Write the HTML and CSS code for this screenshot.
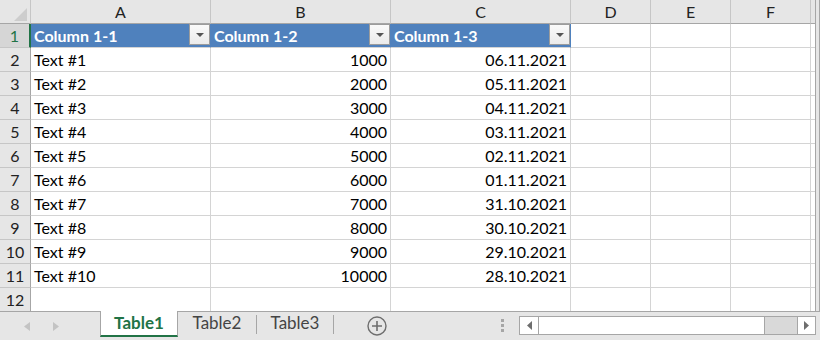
FILE: index.html
```html
<!DOCTYPE html>
<html lang="en">
<head>
  <meta charset="UTF-8">
  <title>Table1</title>
  <link rel="stylesheet" href="styles.css">
</head>
<body>
  <div class="window">
    <div class="sheet">
      <!-- column headers -->
      <div class="cell corner">
        <svg width="16" height="16" viewBox="0 0 16 16"><polygon points="2,15 15,15 15,2" fill="#cdcdcd"/></svg>
      </div>
      <div class="cell ch">A</div>
      <div class="cell ch">B</div>
      <div class="cell ch">C</div>
      <div class="cell ch">D</div>
      <div class="cell ch">E</div>
      <div class="cell ch">F</div>
      <div class="cell ch"></div>

      <!-- table header row -->
      <div class="cell rh sel">1</div>
      <div class="cell hd"><span>Column 1-1</span><span class="filter"><svg width="8" height="4" viewBox="0 0 8 4"><polygon points="0,0 8,0 4,4" fill="#555"/></svg></span></div>
      <div class="cell hd"><span>Column 1-2</span><span class="filter"><svg width="8" height="4" viewBox="0 0 8 4"><polygon points="0,0 8,0 4,4" fill="#555"/></svg></span></div>
      <div class="cell hd"><span>Column 1-3</span><span class="filter"><svg width="8" height="4" viewBox="0 0 8 4"><polygon points="0,0 8,0 4,4" fill="#555"/></svg></span></div>
      <div class="cell"></div><div class="cell"></div><div class="cell"></div><div class="cell"></div>

      <div class="cell rh">2</div>
      <div class="cell">Text #1</div><div class="cell num">1000</div><div class="cell num">06.11.2021</div>
      <div class="cell"></div><div class="cell"></div><div class="cell"></div><div class="cell"></div>

      <div class="cell rh">3</div>
      <div class="cell">Text #2</div><div class="cell num">2000</div><div class="cell num">05.11.2021</div>
      <div class="cell"></div><div class="cell"></div><div class="cell"></div><div class="cell"></div>

      <div class="cell rh">4</div>
      <div class="cell">Text #3</div><div class="cell num">3000</div><div class="cell num">04.11.2021</div>
      <div class="cell"></div><div class="cell"></div><div class="cell"></div><div class="cell"></div>

      <div class="cell rh">5</div>
      <div class="cell">Text #4</div><div class="cell num">4000</div><div class="cell num">03.11.2021</div>
      <div class="cell"></div><div class="cell"></div><div class="cell"></div><div class="cell"></div>

      <div class="cell rh">6</div>
      <div class="cell">Text #5</div><div class="cell num">5000</div><div class="cell num">02.11.2021</div>
      <div class="cell"></div><div class="cell"></div><div class="cell"></div><div class="cell"></div>

      <div class="cell rh">7</div>
      <div class="cell">Text #6</div><div class="cell num">6000</div><div class="cell num">01.11.2021</div>
      <div class="cell"></div><div class="cell"></div><div class="cell"></div><div class="cell"></div>

      <div class="cell rh">8</div>
      <div class="cell">Text #7</div><div class="cell num">7000</div><div class="cell num">31.10.2021</div>
      <div class="cell"></div><div class="cell"></div><div class="cell"></div><div class="cell"></div>

      <div class="cell rh">9</div>
      <div class="cell">Text #8</div><div class="cell num">8000</div><div class="cell num">30.10.2021</div>
      <div class="cell"></div><div class="cell"></div><div class="cell"></div><div class="cell"></div>

      <div class="cell rh">10</div>
      <div class="cell">Text #9</div><div class="cell num">9000</div><div class="cell num">29.10.2021</div>
      <div class="cell"></div><div class="cell"></div><div class="cell"></div><div class="cell"></div>

      <div class="cell rh">11</div>
      <div class="cell">Text #10</div><div class="cell num">10000</div><div class="cell num">28.10.2021</div>
      <div class="cell"></div><div class="cell"></div><div class="cell"></div><div class="cell"></div>

      <div class="cell rh">12</div>
      <div class="cell"></div><div class="cell"></div><div class="cell"></div>
      <div class="cell"></div><div class="cell"></div><div class="cell"></div><div class="cell"></div>
    </div>
    <div class="vscroll"></div>
  </div>

  <div class="tabbar">
    <div class="nav">
      <svg width="6" height="9" viewBox="0 0 6 9"><polygon points="6,0 6,9 0,4.5" fill="#c3c3c3"/></svg>
      <svg width="6" height="9" viewBox="0 0 6 9"><polygon points="0,0 0,9 6,4.5" fill="#c3c3c3"/></svg>
    </div>
    <div class="tab active">Table1</div>
    <div class="tab">Table2</div>
    <div class="sep"></div>
    <div class="tab narrow">Table3</div>
    <div class="sep"></div>
    <div class="add">
      <svg width="20" height="20" viewBox="0 0 20 20">
        <circle cx="10" cy="10" r="9" fill="none" stroke="#6e6e6e" stroke-width="1.4"/>
        <path d="M10 5v10M5 10h10" stroke="#6e6e6e" stroke-width="1.6"/>
      </svg>
    </div>
    <div class="grip"><i></i><i></i><i></i></div>
    <div class="hscroll">
      <div class="sbtn left"><svg width="5" height="9" viewBox="0 0 5 9"><polygon points="5,0 5,9 0,4.5" fill="#6e6e6e"/></svg></div>
      <div class="thumb"></div>
      <div class="track"></div>
      <div class="sbtn right"><svg width="5" height="9" viewBox="0 0 5 9"><polygon points="0,0 0,9 5,4.5" fill="#6e6e6e"/></svg></div>
    </div>
  </div>
</body>
</html>
```

FILE: styles.css
```css
body {
  margin: 0;
  width: 820px;
  height: 340px;
  overflow: hidden;
  background-color: #e6e6e6;
  font-family: Lato, "Open Sans", sans-serif;
  color: #000;
}
.window {
  display: flex;
  height: 311px;
}
.sheet {
  width: 815px;
  height: 311px;
  overflow: hidden;
  background-color: #fff;
  border-right: 1px solid #a6a6a6;
  display: grid;
  grid-template-columns: 31px 180px 180px 180px 80px 80px 80px 80px;
  grid-auto-rows: 24px;
}
.vscroll {
  width: 3px;
  border-right: 1px solid #a6a6a6;
}
.cell {
  box-sizing: border-box;
  border-right: 1px solid #d4d4d4;
  border-bottom: 1px solid #d4d4d4;
  padding: 0 3px;
  font-size: 16px;
  line-height: 23px;
  white-space: nowrap;
  overflow: hidden;
}
.num {
  text-align: right;
}
.corner {
  background-color: #e6e6e6;
  border-right-color: #c6c6c6;
  border-bottom-color: #a6a6a6;
  padding: 0;
  display: flex;
  align-items: flex-end;
  justify-content: flex-end;
}
.corner svg {
  display: block;
  margin: 0 2px 1px 0;
}
.ch {
  background-color: #e6e6e6;
  border-right-color: #c6c6c6;
  border-bottom-color: #a6a6a6;
  text-align: center;
  color: #222;
}
.rh {
  background-color: #e6e6e6;
  border-right-color: #a6a6a6;
  border-bottom-color: #c6c6c6;
  text-align: center;
  padding: 0;
  color: #222;
}
.rh.sel {
  background-color: #d6d6d6;
  color: #217346;
  border-right: 2px solid #217346;
}
.hd {
  background-color: #4f81bd;
  border-right-color: #4f81bd;
  color: #fff;
  font-weight: bold;
  display: flex;
  padding-right: 0;
}
.filter {
  margin-left: auto;
  width: 21px;
  height: 21px;
  box-sizing: border-box;
  border: 1px solid #9c9c9c;
  background: linear-gradient(#fafafa, #ebebeb);
  display: flex;
  align-items: center;
  justify-content: center;
}
.filter svg {
  display: block;
}
.tabbar {
  box-sizing: border-box;
  height: 29px;
  border-top: 1px solid #a6a6a6;
  display: flex;
  align-items: flex-start;
}
.nav {
  width: 100px;
  height: 28px;
  display: flex;
  align-items: center;
  gap: 23px;
  padding-left: 24px;
  box-sizing: border-box;
}
.nav svg {
  display: block;
}
.tab {
  box-sizing: border-box;
  width: 78px;
  height: 24px;
  margin-top: -1px;
  font-size: 17px;
  line-height: 24px;
  text-align: center;
  color: #444;
}
.tab.narrow {
  width: 76px;
}
.tab.active {
  height: 26px;
  background-color: #fff;
  border-left: 1px solid #a6a6a6;
  border-right: 1px solid #a6a6a6;
  border-bottom: 2px solid #217346;
  color: #217346;
  font-weight: bold;
}
.sep {
  width: 1px;
  height: 19px;
  margin-top: 3px;
  background-color: #a6a6a6;
}
.add {
  width: 20px;
  height: 20px;
  margin: 4px 0 0 33px;
}
.add svg {
  display: block;
}
.grip {
  width: 3px;
  margin: 7px 0 0 114px;
  display: flex;
  flex-direction: column;
  gap: 2px;
}
.grip i {
  display: block;
  width: 3px;
  height: 3px;
  background-color: #a6a6a6;
}
.hscroll {
  box-sizing: border-box;
  width: 297px;
  height: 19px;
  margin: 4px 0 0 15px;
  border: 1px solid #a6a6a6;
  display: flex;
}
.sbtn {
  box-sizing: border-box;
  width: 19px;
  background-color: #fff;
  display: flex;
  align-items: center;
  justify-content: center;
}
.sbtn.left {
  border-right: 1px solid #a6a6a6;
}
.sbtn.right {
  width: 18px;
  border-left: 1px solid #a6a6a6;
}
.thumb {
  width: 225px;
  background-color: #fff;
  border-right: 1px solid #a6a6a6;
}
.track {
  flex: 1;
  background-color: #d9d9d9;
}
```
